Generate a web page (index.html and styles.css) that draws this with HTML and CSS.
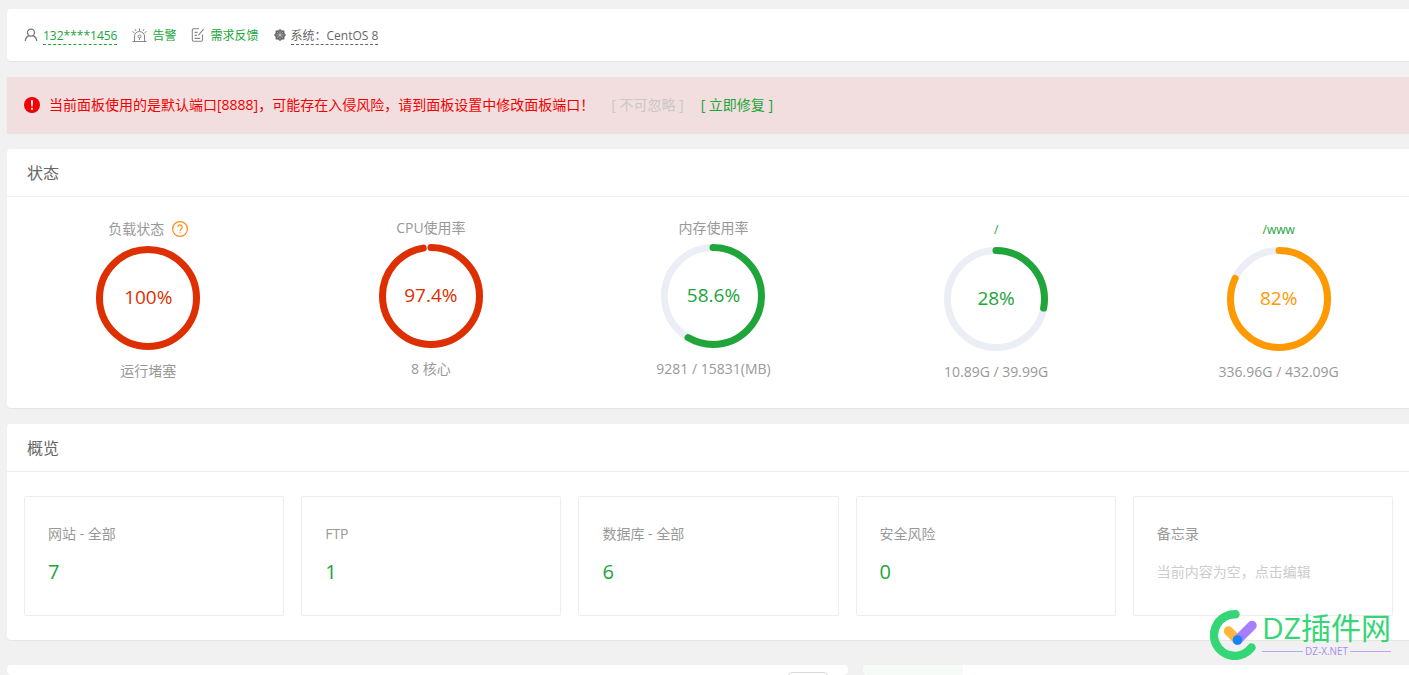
FILE: index.html
```html
<!DOCTYPE html>
<html lang="zh-CN">
<head>
<meta charset="utf-8">
<title>首页</title>
<link rel="stylesheet" href="styles.css">
</head>
<body>
<main class="page">
  <nav class="panel topbar">
    <span class="top-item">
      <svg class="icon" viewBox="0 0 14 14"><circle cx="7" cy="4.6" r="3.5"/><path d="M1.3 13C1.6 9.8 3.4 8.3 5.2 7.7M12.7 13C12.4 9.8 10.6 8.3 8.8 7.7"/></svg>
      <a class="dashed" href="#user">132****1456</a>
    </span>
    <span class="top-item">
      <svg class="icon icon-alarm" viewBox="0 0 15 15"><path d="M.5 13.5H14.5M2.5 13.5V8a5 4.5 0 0 1 10 0V13.5M7.5 .5V3M.5 3.5L2.5 4.8M14.5 3.5L12.5 4.8M3 1.2L4 3M12 1.2L11 3M7.5 10V12"/><circle cx="7.5" cy="8.5" r="1.5"/></svg>
      <a href="#alarm">告警</a>
    </span>
    <span class="top-item">
      <svg class="icon icon-note" viewBox="0 0 14 14"><path d="M8 .8H2.3Q1.3 .8 1.3 1.8V12Q1.3 13.2 2.5 13.2H10.3Q11.5 13.2 11.5 12V6.5M3.6 4.4H6.6M3.6 7.4H6M3.6 10.4H9.2M7.3 7.3L12.6 1.2"/></svg>
      <a href="#feedback">需求反馈</a>
    </span>
    <span class="top-item">
      <svg class="icon icon-os" viewBox="0 0 12 12"><path d="M6 0L8 1.6H10.4V4L12 6L10.4 8V10.4H8L6 12L4 10.4H1.6V8L0 6L1.6 4V1.6H4Z"/><path class="cut" d="M6 1.5V10.5M1.5 6H10.5M3 3L9 9M9 3L3 9"/></svg>
      <span class="dashed">系统：CentOS 8</span>
    </span>
  </nav>

  <section class="alert">
    <svg class="alert-icon" viewBox="0 0 16 16"><circle cx="8" cy="8" r="8"/><path d="M7 3.2H9L8.7 9.5H7.3Z"/><circle class="dot" cx="8" cy="11.8" r="1.1"/></svg>
    <span class="alert-text">当前面板使用的是默认端口[8888]，可能存在入侵风险，请到面板设置中修改面板端口！</span>
    <span class="alert-muted">[ 不可忽略 ]</span>
    <a href="#fix">[ 立即修复 ]</a>
  </section>

  <section class="panel">
    <h2 class="panel-title">状态</h2>
    <ul class="gauges">
      <li class="gauge red">
        <h3 class="gauge-name with-help">负载状态
          <svg class="help" viewBox="0 0 16 16"><circle cx="8" cy="8" r="7.4"/><path d="M5.8 6.2A2.2 2.2 0 1 1 9.2 7.9Q8 8.7 8 9.8M8 11.2V12.3"/></svg>
        </h3>
        <div class="ring">
          <svg viewBox="0 0 104 104"><circle class="bar" cx="52" cy="52" r="48.5"/></svg>
          <span>100%</span>
        </div>
        <p>运行堵塞</p>
      </li>
      <li class="gauge red">
        <h3 class="gauge-name">CPU使用率</h3>
        <div class="ring">
          <svg viewBox="0 0 104 104"><circle cx="52" cy="52" r="48.5"/><circle class="bar" cx="52" cy="52" r="48.5" pathLength="100" stroke-dasharray="97.4 100"/></svg>
          <span>97.4%</span>
        </div>
        <p>8 核心</p>
      </li>
      <li class="gauge green">
        <h3 class="gauge-name">内存使用率</h3>
        <div class="ring">
          <svg viewBox="0 0 104 104"><circle cx="52" cy="52" r="48.5"/><circle class="bar" cx="52" cy="52" r="48.5" pathLength="100" stroke-dasharray="58.6 100"/></svg>
          <span>58.6%</span>
        </div>
        <p>9281 / 15831(MB)</p>
      </li>
      <li class="gauge green">
        <h3 class="gauge-name disk"><a href="#root">/</a></h3>
        <div class="ring">
          <svg viewBox="0 0 104 104"><circle cx="52" cy="52" r="48.5"/><circle class="bar" cx="52" cy="52" r="48.5" pathLength="100" stroke-dasharray="28 100"/></svg>
          <span>28%</span>
        </div>
        <p>10.89G / 39.99G</p>
      </li>
      <li class="gauge orange">
        <h3 class="gauge-name disk"><a href="#www">/www</a></h3>
        <div class="ring">
          <svg viewBox="0 0 104 104"><circle cx="52" cy="52" r="48.5"/><circle class="bar" cx="52" cy="52" r="48.5" pathLength="100" stroke-dasharray="82 100"/></svg>
          <span>82%</span>
        </div>
        <p>336.96G / 432.09G</p>
      </li>
    </ul>
  </section>

  <section class="panel">
    <h2 class="panel-title">概览</h2>
    <ul class="cards">
      <li class="card"><h3>网站 - 全部</h3><a class="count" href="#site">7</a></li>
      <li class="card"><h3>FTP</h3><a class="count" href="#ftp">1</a></li>
      <li class="card"><h3>数据库 - 全部</h3><a class="count" href="#database">6</a></li>
      <li class="card"><h3>安全风险</h3><a class="count" href="#security">0</a></li>
      <li class="card"><h3>备忘录</h3><a class="memo" href="#memo">当前内容为空，点击编辑</a></li>
    </ul>
  </section>

  <div class="bottom">
    <section class="panel software"><button class="software-button" type="button" aria-label="更多"></button></section>
    <section class="panel traffic"><div class="tab"></div></section>
  </div>
</main>

<aside class="watermark">
  <svg class="mark" viewBox="0 0 48 50"><path class="arc" d="M25.5 4.3A20.8 20.8 0 1 0 41.5 37.5"/><path class="left" d="M18.5 21L27.5 30"/><path class="right" d="M27.5 30L42 15.5"/><circle cx="27.5" cy="30" r="4.8"/></svg>
  <div>
    <div class="mark-name">DZ插件网</div>
    <div class="mark-site">DZ-X.NET</div>
  </div>
</aside>
</body>
</html>
```
FILE: styles.css
```css
* { box-sizing: border-box; margin: 0; padding: 0; }

body {
  height: 100vh;
  overflow: hidden;
  position: relative;
  background: #f1f1f1;
  color: #666;
  font: 14px/20px "Open Sans", "Noto Sans CJK SC", sans-serif;
}

a { color: #20a53a; text-decoration: none; }
ul { list-style: none; }
h2, h3 { font-weight: 400; }

.page {
  height: 100%;
  display: flex;
  flex-direction: column;
  gap: 16px;
  margin-right: -11px;
  padding: 9px 0 0 7px;
}

.panel {
  background: #fff;
  border-radius: 4px;
  box-shadow: 0 1px 1px rgba(0, 0, 0, .05);
}

.topbar {
  display: flex;
  align-items: center;
  gap: 15px;
  height: 52px;
  padding: 2px 17px 0;
  font-size: 12px;
  line-height: 16px;
}
.top-item { display: flex; align-items: center; gap: 5px; }
.icon { width: 14px; height: 14px; margin-bottom: 2px; fill: none; stroke: #777; stroke-width: 1.3; }
.icon-alarm { width: 15px; height: 15px; stroke: #888; stroke-width: 1; }
.icon-note { stroke: #888; stroke-width: 1.1; }
.icon-os { width: 12px; height: 12px; fill: #666; stroke: none; }
.icon-os .cut { stroke: #ccc; stroke-width: .6; }
.dashed { border-bottom: 1px dashed currentColor; }

.alert {
  display: flex;
  align-items: center;
  height: 56px;
  padding: 0 17px;
  background: #f2dede;
  box-shadow: 0 1px 1px rgba(0, 0, 0, .05);
}
.alert-icon { width: 16px; height: 16px; margin-right: 9px; fill: #f00000; }
.alert-icon path, .alert-icon .dot { fill: #fff; }
.alert-text { margin-right: 17px; color: #f00000; }
.alert-muted { margin-right: 17px; color: #c8c8c8; }

.panel-title {
  height: 48px;
  padding: 0 20px;
  border-bottom: 1px solid #ededed;
  font-size: 16px;
  line-height: 48px;
}

.gauges {
  display: grid;
  grid-template-columns: repeat(5, 1fr);
  height: 211px;
  padding-top: 21px;
  color: #999;
}
.gauge { display: flex; flex-direction: column; align-items: center; }
.gauge-name { margin-bottom: 6px; font-size: 14px; line-height: 20px; }
.with-help { display: flex; align-items: center; gap: 8px; line-height: 22px; }
.help { width: 16px; height: 16px; fill: none; stroke: #ff8c1a; stroke-width: 1.2; }
.disk { font-size: 12px; line-height: 23px; }

.ring { display: grid; place-items: center; margin-bottom: 11px; font-size: 19px; line-height: 28px; }
.ring > * { grid-area: 1 / 1; }
.ring span { padding-bottom: 2px; }
.ring svg { width: 104px; height: 104px; transform: rotate(-90deg); }
.ring circle { fill: none; stroke: #ebeef5; stroke-width: 7; }
.ring .bar { stroke: currentColor; stroke-linecap: round; }
.red .ring { color: #dd2f00; }
.green .ring { color: #20a53a; }
.orange .ring { color: #ff9900; }

.cards {
  display: grid;
  grid-template-columns: repeat(5, 1fr);
  gap: 17px;
  padding: 24px 27px 24px 17px;
}
.card {
  height: 120px;
  padding: 27px 23px;
  border: 1px solid #ededed;
  border-radius: 2px;
  color: #999;
}
.card h3 { margin-bottom: 14px; font-size: 14px; }
.count { display: block; font-size: 20px; line-height: 28px; }
.memo { display: block; color: #ccc; line-height: 28px; }

.bottom {
  flex: 1;
  display: grid;
  grid-template-columns: 86fr 57fr;
  gap: 15px;
  min-height: 0;
  padding-top: 9px;
}
.bottom .panel { overflow: hidden; }
.software { display: flex; justify-content: flex-end; padding: 7px 20px 0; }
.software-button {
  flex: none;
  width: 40px;
  height: 30px;
  border: 1px solid #d8d8e6;
  border-radius: 4px;
  background: #fff;
}
.tab { width: 100px; height: 100%; background: #f6fbf7; }

.watermark {
  position: absolute;
  right: 18px;
  bottom: 15px;
  display: flex;
  align-items: center;
  gap: 4px;
}
.mark { width: 48px; height: 50px; fill: none; stroke-linecap: round; }
.arc { stroke: #34d675; stroke-width: 8.5; }
.left { stroke: #ffb73d; stroke-width: 9.5; }
.right { stroke: #a57fff; stroke-width: 9.5; }
.mark circle { fill: #1684fc; }
.mark-name { color: #34d675; font-size: 30px; line-height: 32px; }
.mark-site {
  display: flex;
  align-items: center;
  gap: 2px;
  color: #a98bf5;
  font-size: 10px;
  line-height: 14px;
}
.mark-site::before, .mark-site::after { content: ""; flex: 1; height: 1px; background: #b9a4f7; }
```
